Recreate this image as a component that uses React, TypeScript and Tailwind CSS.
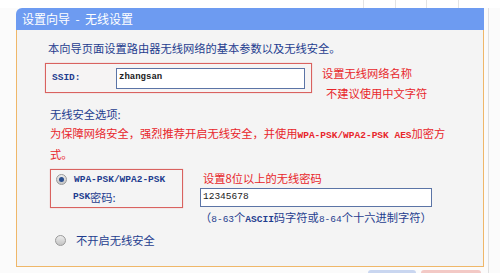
const cn = "font-['SimSun','Noto_Sans_CJK_SC',sans-serif]";
const mono = "font-['Liberation_Mono','Noto_Sans_CJK_SC',monospace]";

function Radio({ checked }: { checked?: boolean }) {
  return (
    <span className="flex h-[11px] w-[11px] items-center justify-center rounded-full border border-[#9a9a9a] bg-gradient-to-b from-[#ececec] to-[#c4c4c4]">
      {checked && <span className="h-[5px] w-[5px] rounded-full bg-[#2a4f8f]" />}
    </span>
  );
}

export default function App() {
  return (
    <div className={`flex h-[273px] w-[500px] flex-col overflow-hidden bg-[#fbfbfb] ${cn}`}>
      {/* top tab strip remains */}
      <div className="flex h-[8px] shrink-0 bg-white">
        <div className="w-[363px]" />
        <div className="w-[32px] border-l border-[#e4e4e4]" />
        <div className="w-[31px] border-l border-[#e4e4e4]" />
        <div className="w-[32px] border-l border-[#e4e4e4]" />
        <div className="w-[30px] border-l border-[#e4e4e4]" />
      </div>

      <div className="flex">
        <div className="w-[16px] shrink-0" />
        <div className="w-[468px] shrink-0">
          {/* header */}
          <div className="flex h-[22px] items-center rounded-tl-[6px] bg-[#6d9bf1] pl-[6px] text-[12px] text-white">
            设置向导 &nbsp;-&nbsp; 无线设置
          </div>

          {/* body */}
          <div className="h-[237px] border-x border-b border-[#efb769] bg-[#f4f4f4] text-[11.25px] text-[#1f3d8f]">
            <div className="ml-[31px] pt-[9px] leading-[18px]">
              本向导页面设置路由器无线网络的基本参数以及无线安全。
            </div>

            {/* SSID row */}
            <div className="mt-[6px] flex">
              <div className="ml-[28px] flex h-[30px] w-[267px] items-center border border-[#d9625f] bg-[#f6f4f4] pl-[6px] shadow-[0_0_1px_#e5a0a0]">
                <span className={`w-[64px] text-[9.5px] font-bold ${mono}`}>SSID:</span>
                <div className={`flex h-[21px] w-[189px] items-center border border-[#5b74a6] bg-white pl-[2px] text-[9px] font-bold text-[#222] ${mono}`}>
                  zhangsan
                </div>
              </div>
              <div className="ml-[10px] leading-[20px] text-[#e8262b]">
                <div>设置无线网络名称</div>
                <div className="pl-[4px]">不建议使用中文字符</div>
              </div>
            </div>

            <div className="ml-[33px] mt-[1px] leading-[20px]">无线安全选项:</div>
            <div className="ml-[33px] leading-[19px] text-[#e8262b]">
              为保障网络安全，强烈推荐开启无线安全，并使用
              <span className={`text-[9.5px] font-bold ${mono}`}>WPA-PSK/WPA2-PSK AES</span>
              加密方
              <br />
              式。
            </div>

            {/* WPA row */}
            <div className="mt-[5px] flex">
              <div className="ml-[33px] flex h-[39px] w-[133px] flex-col border border-[#d9625f] pl-[5px] pt-[2px] shadow-[0_0_1px_#e5a0a0]">
                <div className="flex h-[16px] items-center gap-[7px]">
                  <Radio checked />
                  <span className={`text-[9.5px] font-bold ${mono}`}>WPA-PSK/WPA2-PSK</span>
                </div>
                <div className="ml-[17px] flex h-[20px] items-center">
                  <span className={`text-[9.5px] font-bold ${mono}`}>PSK</span>
                  <span>密码:</span>
                </div>
              </div>
              <div className="ml-[17px] flex flex-col">
                <div className="pl-[3px] leading-[18px] text-[#e8262b]">设置8位以上的无线密码</div>
                <div className={`mt-[1px] flex h-[19px] w-[232px] items-center border border-[#5b74a6] bg-white pl-[2px] text-[9.5px] text-[#222] ${mono}`}>
                  12345678
                </div>
                <div className="leading-[20px]">
                  （<span className={`text-[9.5px] ${mono}`}>8-63</span>个<span className={`text-[9.5px] font-bold ${mono}`}>ASCII</span>码字符或<span className={`text-[9.5px] ${mono}`}>8-64</span>个十六进制字符）
                </div>
              </div>
            </div>

            <div className="ml-[38px] mt-[2px] flex items-center gap-[10px]">
              <Radio />
              <span>不开启无线安全</span>
            </div>
          </div>

          {/* bottom buttons cut off */}
          <div className="mt-[3px] flex">
            <div className="ml-[352px] h-[4px] w-[48px] rounded-t-[3px] bg-[#c9d6f0]" />
            <div className="ml-[5px] h-[4px] w-[60px] rounded-t-[3px] bg-[#f3c9c5]" />
          </div>
        </div>
        <div className="ml-[4px] w-[1px] bg-[#e0e0e0]" />
      </div>
    </div>
  );
}
